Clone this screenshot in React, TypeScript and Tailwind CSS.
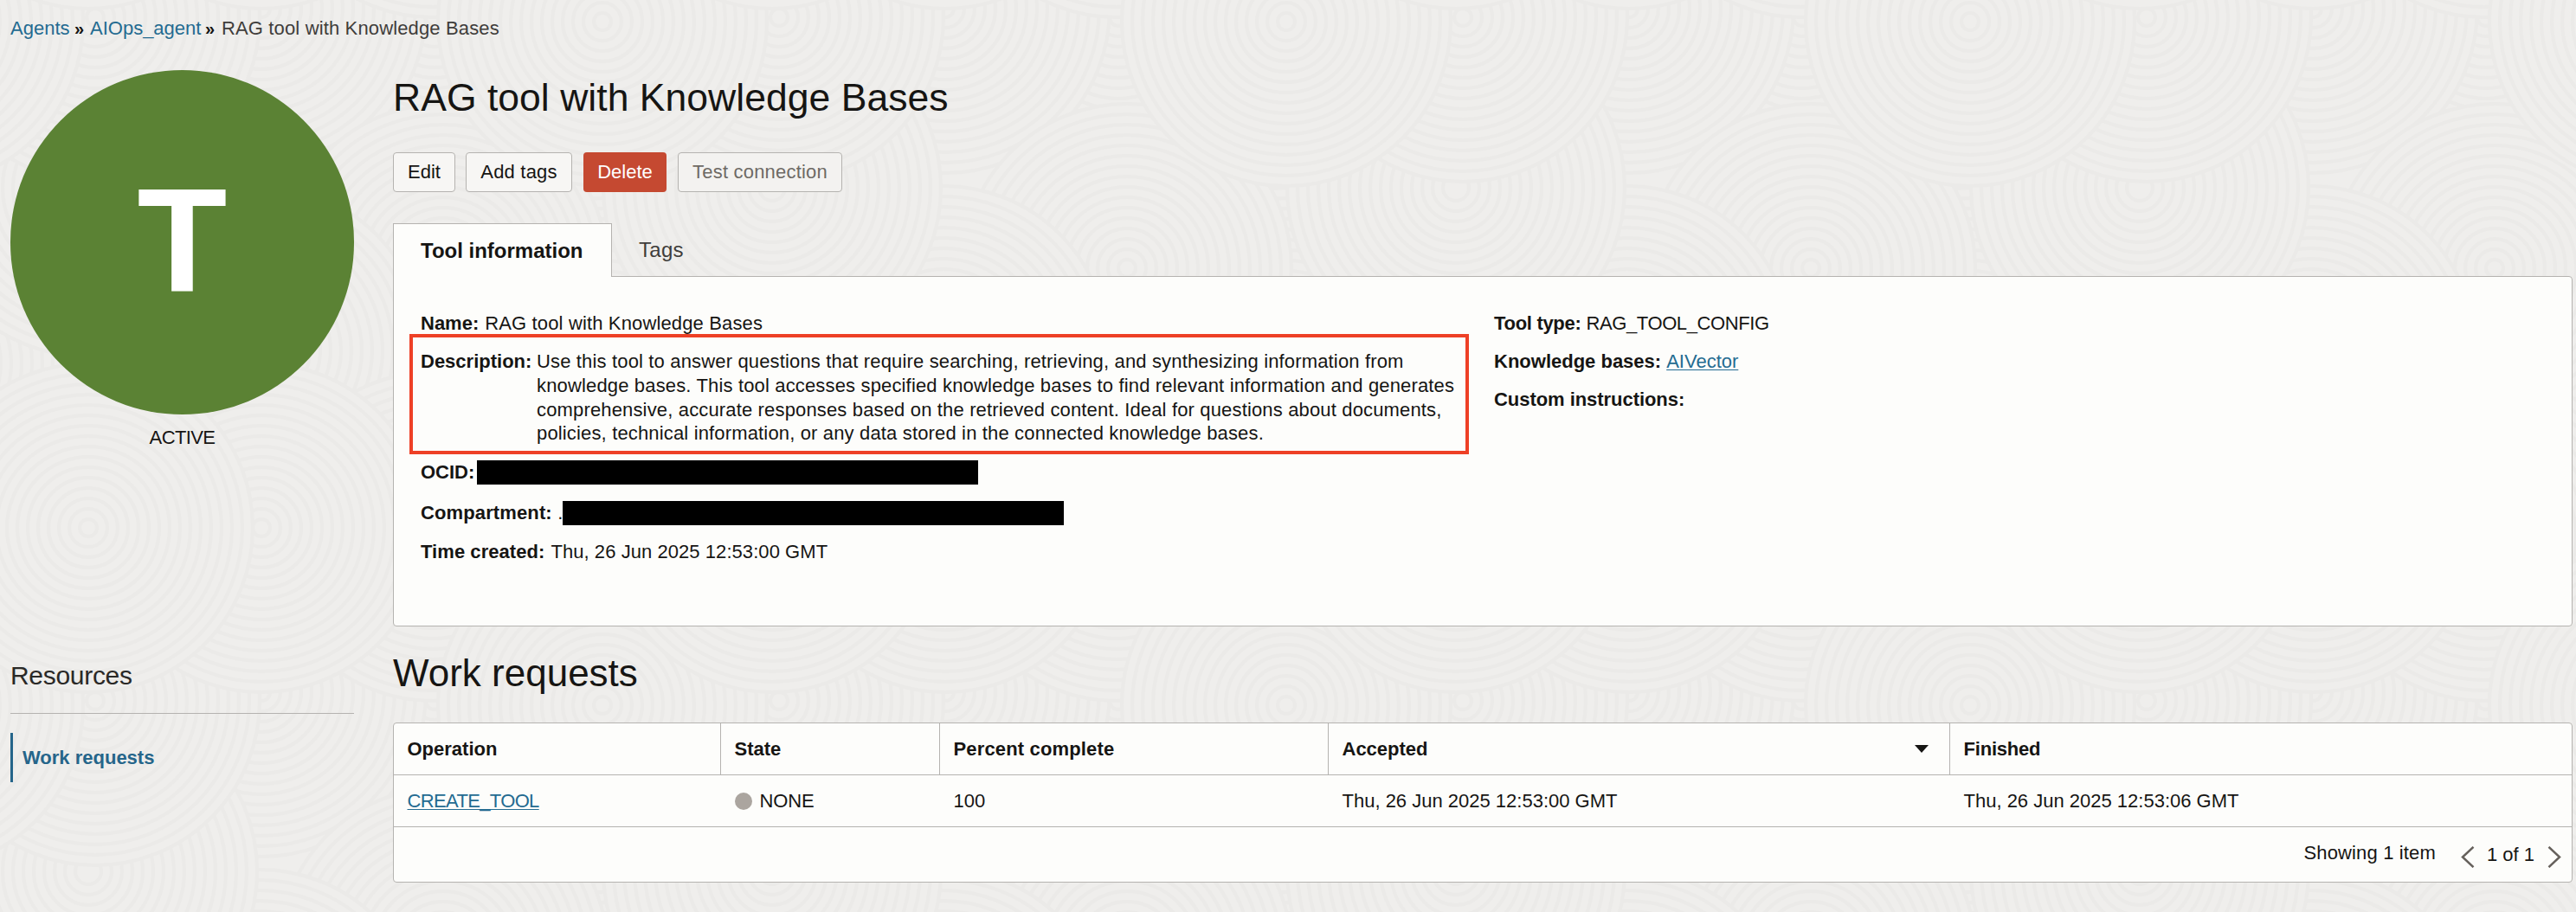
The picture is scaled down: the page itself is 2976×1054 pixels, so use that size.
import type { ReactNode } from "react";

const TILE = 790;

// [cx, cy, r] of the ringed discs in one background tile, back to front
const DISCS: [number, number, number][] = [
  [502, 20, 190],
  [302, 10, 190],
  [696, 420, 215],
  [512, 310, 190],
  [300, 405, 190],
  [700, 700, 215],
  [500, 620, 190],
  [102, 217, 195],
  [110, 20, 190],
  [696, 25, 190],
  [302, 610, 190],
  [102, 610, 190],
];

function Backdrop() {
  const shapes: ReactNode[] = [];
  DISCS.forEach(([cx, cy, r], i) => {
    for (const dx of [-TILE, 0, TILE])
      for (const dy of [-TILE, 0, TILE]) {
        const x = cx + dx;
        const y = cy + dy;
        if (x + r < 0 || x - r > TILE || y + r < 0 || y - r > TILE) continue;
        for (let k = r; k > 3; k -= 12)
          shapes.push(
            <circle key={`${i}:${dx}:${dy}:${k}`} cx={x} cy={y} r={k} fill="#efeeec" stroke="#ebeae8" strokeWidth="4" />
          );
      }
  });
  return (
    <svg className="absolute inset-0 h-full w-full" aria-hidden="true">
      <defs>
        <pattern id="rings" width={TILE} height={TILE} patternUnits="userSpaceOnUse">
          <rect width={TILE} height={TILE} fill="#efeeec" />
          {shapes}
        </pattern>
      </defs>
      <rect width="100%" height="100%" fill="url(#rings)" />
    </svg>
  );
}

function Field({ label, children, className = "" }: { label: string; children?: ReactNode; className?: string }) {
  return (
    <div className={`flex h-7 ${className}`}>
      <span className="font-bold whitespace-nowrap">{label}</span>
      {children}
    </div>
  );
}

const link = "text-[#246b91] underline decoration-1 underline-offset-2";
const row =
  "grid h-[60px] grid-cols-[378px_253px_449px_718px_718px] border-b border-[#b5b3b0] [&>div]:flex [&>div]:items-center [&>div]:pl-[15.5px]";

export default function App() {
  return (
    <div className="relative h-[1054px] w-[2976px] overflow-hidden bg-[#efeeec] font-['Liberation_Sans',Arial,sans-serif] text-[22px] leading-7 text-[#161513]">
      <Backdrop />
      <div className="relative pl-3">
        <nav className="flex pt-[19px] text-[#3f3d3b]">
          <a className="w-[68px] text-[#246b91]">Agents</a>
          <span className="ml-[6px] w-[18px] text-[20px] font-bold text-[#161513]">»</span>
          <a className="w-[128px] text-[#246b91]">AIOps_agent</a>
          <span className="ml-[5px] w-[19px] text-[20px] font-bold text-[#161513]">»</span>
          <span className="tracking-[0.14px]">RAG tool with Knowledge Bases</span>
        </nav>

        <div className="flex pt-[34px]">
          <aside className="w-[397px]">
            <div className="flex h-[398px] items-center justify-center rounded-full bg-[#5b8234] pb-1 text-[170px] font-bold text-white">
              T
            </div>
            <div className="mt-[13px] text-center tracking-[-0.6px]">ACTIVE</div>
            <h2 className="mt-[241px] border-b border-[#b5b3b0] pb-[23px] text-[30px] leading-10 tracking-[-0.3px] text-[#2a2927]">
              Resources
            </h2>
            <div className="mt-[22px] flex h-[57px] items-center border-l-[3px] border-[#25658a] pl-[11px] font-bold text-[#25658a]">
              Work requests
            </div>
          </aside>

          <main className="ml-[45px] w-[2518px]">
            <h1 className="pt-[6px] text-[44.5px] leading-[52px] tracking-[0.03px]">RAG tool with Knowledge Bases</h1>

            <div className="mt-[37px] flex h-[46px]">
              <button className="w-[72px] rounded border border-[#b5b3b0] bg-[#f7f6f4]">Edit</button>
              <button className="ml-3 w-[123px] rounded border border-[#b5b3b0] bg-[#f7f6f4] tracking-[0.2px]">Add tags</button>
              <button className="ml-[13px] w-24 rounded bg-[#c54931] text-white">Delete</button>
              <button className="ml-[13px] w-[190px] rounded border border-[#b5b3b0] bg-[#f3f2f0] tracking-[0.2px] text-[#6e6a65]">
                Test connection
              </button>
            </div>

            <div className="relative z-10 -mb-px mt-9 flex h-[62px] text-[24px]">
              <div className="w-[253px] border border-b-0 border-[#b5b3b0] bg-[#fdfdfb] pl-[31px] pt-[17px] font-bold">
                Tool information
              </div>
              <div className="pl-[31px] pt-[17px] tracking-[0.3px] text-[#3f3d3b]">Tags</div>
            </div>

            <section className="flex h-[405px] rounded rounded-tl-none border border-[#b5b3b0] bg-[#fdfdfb] pl-[31px] pt-10">
              <div className="w-[1240px]">
                <Field label="Name:">
                  <span className="ml-[7px] tracking-[0.14px]">RAG tool with Knowledge Bases</span>
                </Field>
                <div className="relative mt-4 flex">
                  <span className="w-[134px] shrink-0 font-bold">Description:</span>
                  <p className="whitespace-nowrap leading-[27.75px] tracking-[0.155px]">
                    Use this tool to answer questions that require searching, retrieving, and synthesizing information from
                    <br />
                    knowledge bases. This tool accesses specified knowledge bases to find relevant information and generates
                    <br />
                    comprehensive, accurate responses based on the retrieved content. Ideal for questions about documents,
                    <br />
                    policies, technical information, or any data stored in the connected knowledge bases.
                  </p>
                  <div className="absolute -left-[13px] -top-[18px] h-[139px] w-[1224px] border-4 border-[#ee4026]" />
                </div>
                <Field label="OCID:" className="mt-[17px]">
                  <span className="ml-[3px] h-7 w-[579px] bg-black" />
                </Field>
                <Field label="Compartment:" className="mt-[19px] tracking-[0.12px]">
                  <span className="ml-[6.5px] w-[6px]">.</span>
                  <span className="h-7 w-[579px] bg-black" />
                </Field>
                <Field label="Time created:" className="mt-[17px] tracking-[0.06px]">
                  <span className="ml-[7px]">Thu, 26 Jun 2025 12:53:00 GMT</span>
                </Field>
              </div>
              <div className="flex flex-col gap-4">
                <Field label="Tool type:" className="tracking-[-0.3px]">
                  <span className="ml-[6px] tracking-[-0.4px]">RAG_TOOL_CONFIG</span>
                </Field>
                <Field label="Knowledge bases:">
                  <a className={`ml-[6px] ${link}`}>AIVector</a>
                </Field>
                <Field label="Custom instructions:" className="tracking-[-0.05px]" />
              </div>
            </section>

            <h2 className="mt-7 text-[44px] leading-[52px]">Work requests</h2>

            <section className="mt-[31px] h-[185px] rounded border border-[#b5b3b0] bg-[#fdfdfb]">
              <div className={`${row} font-bold`}>
                <div className="border-r border-[#b5b3b0]">Operation</div>
                <div className="border-r border-[#b5b3b0]">State</div>
                <div className="border-r border-[#b5b3b0] tracking-[0.15px]">Percent complete</div>
                <div className="justify-between border-r border-[#b5b3b0] pr-[24px]">
                  Accepted
                  <svg className="h-[9px] w-4" viewBox="0 0 16 9">
                    <path d="M0 0h16L8 9z" fill="#161513" />
                  </svg>
                </div>
                <div className="tracking-[-0.2px]">Finished</div>
              </div>
              <div className={row}>
                <div>
                  <a className={`tracking-[-0.65px] ${link}`}>CREATE_TOOL</a>
                </div>
                <div>
                  <span className="mr-[9px] h-5 w-5 rounded-full bg-[#aba59f]" />
                  <span className="tracking-[-0.1px]">NONE</span>
                </div>
                <div>100</div>
                <div>Thu, 26 Jun 2025 12:53:00 GMT</div>
                <div>Thu, 26 Jun 2025 12:53:06 GMT</div>
              </div>
              <div className="flex justify-end pr-3 pt-[16px]">
                <span className="tracking-[0.15px]">Showing 1 item</span>
                <svg className="ml-[29px] mt-[6px] h-[25px] w-4" viewBox="0 0 16 25" fill="none" stroke="#66615c" strokeWidth="2.5">
                  <path d="M14.5 .8L2 12.5l12.5 11.7" />
                </svg>
                <span className="ml-[14px] mt-[2px]">1 of 1</span>
                <svg className="ml-[15px] mt-[6px] h-[25px] w-4" viewBox="0 0 16 25" fill="none" stroke="#66615c" strokeWidth="2.5">
                  <path d="M1.5 .8L14 12.5 1.5 24.2" />
                </svg>
              </div>
            </section>
          </main>
        </div>
      </div>
    </div>
  );
}
